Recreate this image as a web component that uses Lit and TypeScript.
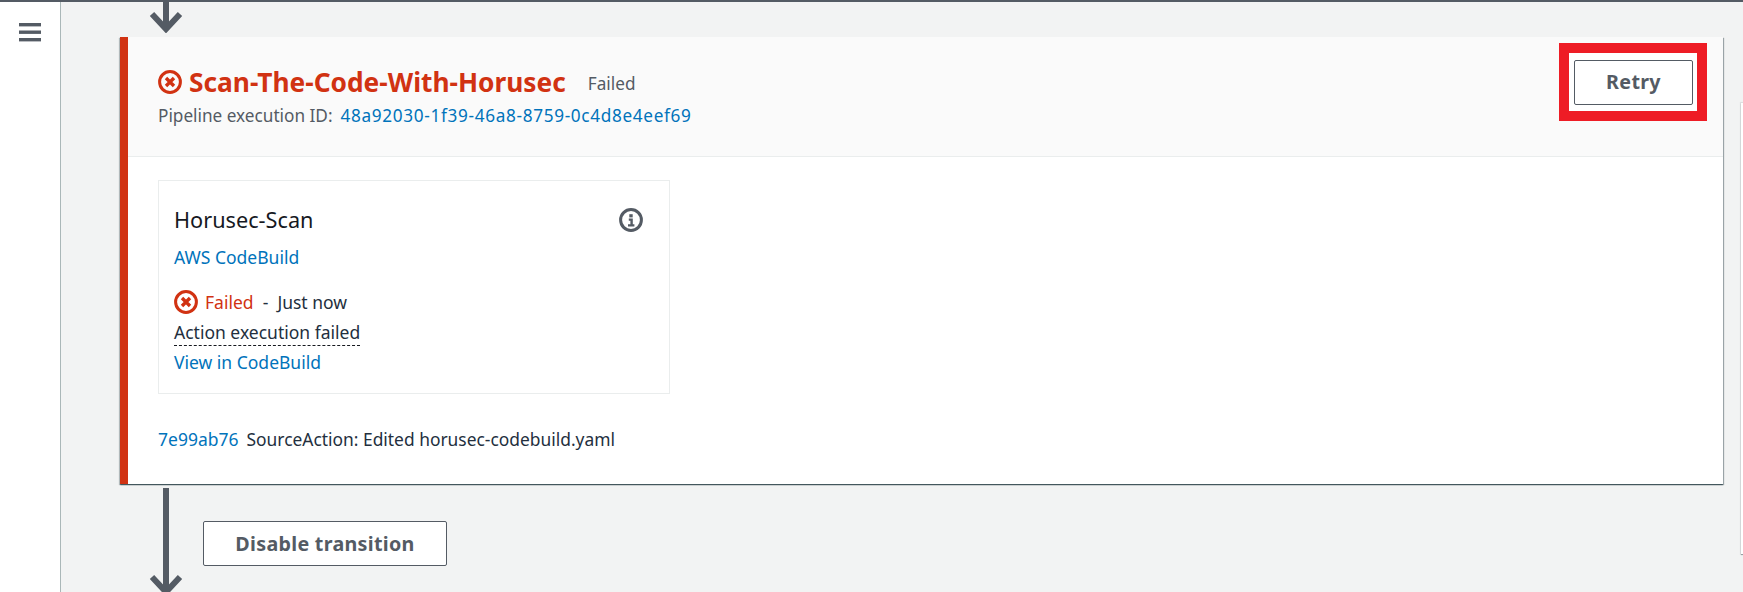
import { LitElement, html, css } from "lit";
import { customElement } from "lit/decorators.js";

const failIcon = (cls: string) => html`<svg class=${cls} viewBox="0 0 24 24" fill="none" stroke="#d13212">
  <circle cx="12" cy="12" r="10.4" stroke-width="3"></circle>
  <path d="M8 8l8 8M16 8l-8 8" stroke-width="3.4"></path>
</svg>`;

@customElement("app-root")
export class AppRoot extends LitElement {
  static styles = css`
    :host { display: block; height: 592px; overflow: hidden; font-family: "Noto Sans", "Open Sans", sans-serif; font-size: 17.5px; color: #232f3e; }
    * { box-sizing: border-box; }
    a { color: #0073bb; text-decoration: none; }
    .page { display: flex; height: 592px; border-top: 2px solid #545b64; }
    .side { width: 61px; flex: none; background: #fff; border-right: 1px solid #aab7b8; padding: 21px 0 0 19px; }
    .side svg { display: block; width: 22px; height: 19px; }
    .main { flex: 1; min-width: 0; background: #f2f3f3; display: flex; gap: 18px; padding-left: 59px; }
    .col { width: 1603px; flex: none; display: flex; flex-direction: column; }
    .sliver { flex: 1; margin-top: 101px; height: 451px; background: #fff; box-shadow: 0 1px 1px 0 rgba(0,28,36,.4), 0 0 1px 1px rgba(0,28,36,.1); }
    .arrow-top { display: block; width: 34px; height: 31px; margin: 0 0 4px 29px; }
    .card { height: 447px; background: #fff; border-left: 8px solid #d13212; box-shadow: 0 1px 1px 0 rgba(0,28,36,.5), 1px 1px 1px 0 rgba(0,28,36,.3), -1px 1px 1px 0 rgba(0,28,36,.2); display: flex; flex-direction: column; }
    .head { height: 120px; flex: none; background: #fafafa; border-bottom: 1px solid #eaeded; display: flex; justify-content: space-between; padding: 6px 16px 0 30px; }
    .titles { padding-top: 27px; }
    .title-row { display: flex; align-items: center; height: 24px; }
    .icon-lg { width: 24px; height: 24px; flex: none; margin-right: 7px; }
    h2 { margin: 0; font-size: 26.3px; line-height: 24px; font-weight: 700; color: #d13212; white-space: nowrap; }
    .state { margin-left: 22px; color: #545b64; font-size: 17.2px; padding-top: 3px; }
    .exec { margin-top: 9px; display: flex; gap: 8px; color: #545b64; font-size: 17.2px; line-height: 26px; white-space: nowrap; }
    .exec a { letter-spacing: .66px; }
    .annot { border: 10px solid #ee1c25; background: #fff; padding: 7px 4px 6px 5px; width: 148px; height: 78px; }
    .btn { display: flex; align-items: center; justify-content: center; background: #fff; border: 1px solid #545b64; border-radius: 2px; color: #545b64; font-weight: 700; font-size: 19.7px; letter-spacing: .3px; font-family: inherit; height: 45px; padding: 0 0 2px; }
    .annot .btn { width: 119px; }
    .body { padding: 23px 30px 0; flex: 1; }
    .action { width: 512px; height: 214px; border: 1px solid #eaeded; padding: 24px 15px 0; display: flex; flex-direction: column; background: #fff; }
    .name-row { display: flex; justify-content: space-between; align-items: center; height: 30px; padding-right: 10px; }
    .name { font-size: 21.7px; line-height: 30px; color: #16191f; }
    .name-row svg { width: 24px; height: 24px; margin-right: 1px; }
    .provider { margin-top: 8px; line-height: 28px; }
    .status { margin-top: 17px; display: flex; align-items: center; height: 28px; white-space: pre; }
    .icon-sm { width: 24px; height: 24px; flex: none; margin-right: 7px; }
    .failed { color: #d13212; }
    .msg { align-self: flex-start; line-height: 26px; margin-top: 3px; border-bottom: 1px dashed #16191f; height: 27px; }
    .view { line-height: 28px; margin-top: 2px; }
    .commit { margin-top: 31px; display: flex; gap: 8px; line-height: 28px; }
    .commit span { font-size: 17.4px; }
    .trans { height: 108px; padding: 4px 0 0 29px; display: flex; }
    .trans svg { width: 34px; height: 104px; flex: none; }
    .trans .btn { width: 244px; margin: 33px 0 0 20px; padding: 0; }
  `;

  render() {
    return html`<div class="page">
      <nav class="side">
        <svg viewBox="0 0 22 19" fill="#545b64"><rect width="22" height="3.4" y="0"></rect><rect width="22" height="3.4" y="7.5"></rect><rect width="22" height="3.4" y="15"></rect></svg>
      </nav>
      <main class="main">
        <div class="col">
          <svg class="arrow-top" viewBox="0 0 34 31" fill="none" stroke="#545b64" stroke-width="6"><path d="M17 0v28M3 12l14 15 14-15"></path></svg>
          <section class="card">
            <header class="head">
              <div class="titles">
                <div class="title-row">
                  ${failIcon("icon-lg")}
                  <h2>Scan-The-Code-With-Horusec</h2>
                  <span class="state">Failed</span>
                </div>
                <div class="exec"><span>Pipeline execution ID:</span><a>48a92030-1f39-46a8-8759-0c4d8e4eef69</a></div>
              </div>
              <div class="annot"><button class="btn">Retry</button></div>
            </header>
            <div class="body">
              <div class="action">
                <div class="name-row">
                  <span class="name">Horusec-Scan</span>
                  <svg viewBox="0 0 24 24" fill="none" stroke="#545b64">
                    <circle cx="12" cy="12" r="10.4" stroke-width="3"></circle>
                    <path d="M12 6.2v3.2" stroke-width="3.4"></path>
                    <path d="M9.8 11.6H12.6V17M9 17.4h6.4" stroke-width="2.4"></path>
                  </svg>
                </div>
                <a class="provider">AWS CodeBuild</a>
                <div class="status">${failIcon("icon-sm")}<span class="failed">Failed</span><span>  -  Just now</span></div>
                <span class="msg">Action execution failed</span>
                <a class="view">View in CodeBuild</a>
              </div>
              <div class="commit"><a>7e99ab76</a><span>SourceAction: Edited horusec-codebuild.yaml</span></div>
            </div>
          </section>
          <div class="trans">
            <svg viewBox="0 0 34 104" fill="none" stroke="#545b64" stroke-width="6"><path d="M17 0v104M3 89l14 15 14-15"></path></svg>
            <button class="btn">Disable transition</button>
          </div>
        </div>
        <div class="sliver"></div>
      </main>
    </div>`;
  }
}
